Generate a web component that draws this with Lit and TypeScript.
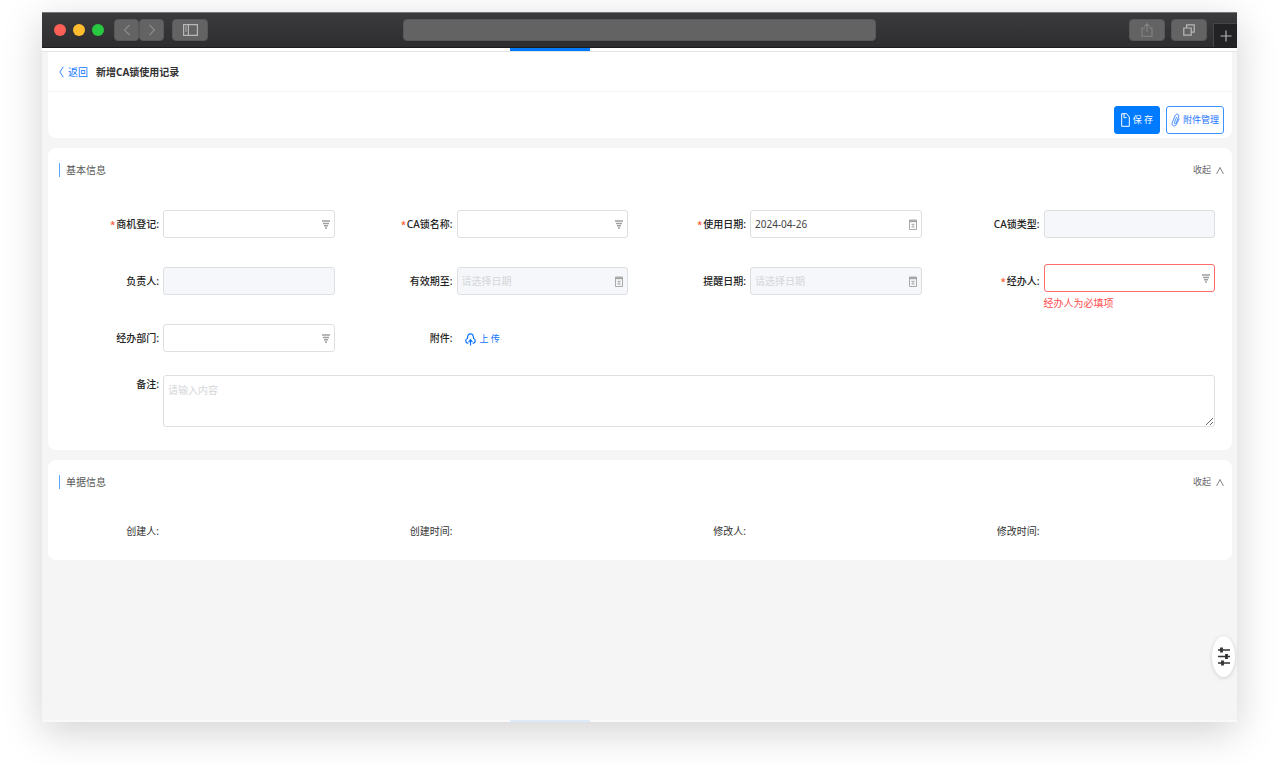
import { LitElement, html, css, svg, nothing } from "lit";
import { customElement, property, state } from "lit/decorators.js";
import { classMap } from "lit/directives/class-map.js";

type Kind = "lookup" | "date" | "text" | "upload";

interface Field {
  id: string;
  label: string;
  kind: Kind;
  required?: boolean;
  disabled?: boolean;
  value?: string;
  placeholder?: string;
  error?: string;
}

const FIELDS: Field[] = [
  { id: "opportunity", label: "商机登记", kind: "lookup", required: true },
  { id: "ca-name", label: "CA锁名称", kind: "lookup", required: true },
  { id: "use-date", label: "使用日期", kind: "date", required: true, value: "2024-04-26" },
  { id: "ca-type", label: "CA锁类型", kind: "text", disabled: true },
  { id: "owner", label: "负责人", kind: "text", disabled: true },
  { id: "valid-until", label: "有效期至", kind: "date", disabled: true, placeholder: "请选择日期" },
  { id: "remind-date", label: "提醒日期", kind: "date", disabled: true, placeholder: "请选择日期" },
  { id: "handler", label: "经办人", kind: "lookup", required: true, error: "经办人为必填项" },
  { id: "department", label: "经办部门", kind: "lookup" },
  { id: "attachment", label: "附件", kind: "upload" },
];

const RECORD = ["创建人", "创建时间", "修改人", "修改时间"];

const icon = (w: number, h: number, body: unknown) => html`<svg
  width=${w} height=${h} viewBox="0 0 ${w} ${h}" fill="none" stroke="currentColor" aria-hidden="true"
>${body}</svg>`;

const icons = {
  prev: icon(8, 12, svg`<path d="M6.5 1 1.5 6l5 5" stroke-width="1.2"/>`),
  next: icon(8, 12, svg`<path d="m1.5 1 5 5-5 5" stroke-width="1.2"/>`),
  sidebar: icon(15, 12, svg`<path d="M.6.6h13.8v10.8H.6zM5.4.6v10.8" stroke-width="1.2"/><path d="M2 3h2M2 5h2M2 7h2" stroke-width=".9"/>`),
  share: icon(12, 14, svg`<path d="M4 5H1v8.2h10V5H8M6 9V1M3.4 3.4 6 .8l2.6 2.6" stroke-width="1.1"/>`),
  tabs: icon(12, 12, svg`<path d="M.8 4h7.4v7.2H.8zM3.6 4V.8h7.6v7.4h-3" stroke-width="1.2"/>`),
  plus: icon(12, 12, svg`<path d="M6 .5v11M.5 6h11" stroke-width="1.1"/>`),
  back: icon(5, 12, svg`<path d="M4.4.8.8 6l3.6 5.2" stroke-width=".9"/>`),
  save: icon(9, 14, svg`<path d="M.7.7h4.9L8.3 4v9.3H.7zM3 .7v4h2.600" stroke-width="1"/>`),
  clip: icon(9, 14, svg`<path d="M8.300 5.400 5.400 11.400C4 14.200.2 13 1.200 9.800L4 3C5.200-.1 8.800.9 7.600 4L5.200 10c-.7 1.500-2.200.9-1.700-.7L5.600 4.200" stroke-width=".8"/>`),
  chevron: icon(8, 9, svg`<path d="m.6 8 3.400-6.500L7.400 8" stroke-width=".8"/>`),
  filter: icon(8, 9, svg`<path d="M0 1h8M1 3.500h6M2 5.700h4M3 8h2" stroke-width="1.500"/>`),
  calendar: icon(8, 11, svg`<path d="M.5 1h7v9.500h-7z" stroke-width=".9"/><path d="M.5 2.200h7" stroke-width="1.900"/><path d="M2.300 5.300h3.400M2.300 8h3.400M4 5.300V8" stroke-width=".8"/>`),
  upload: icon(11, 13, svg`<path d="M3.400 10.200H2.600C.2 9.900.2 5.900 2.400 5.500 2.600-.6 8.400-.6 8.600 5.500c2.200.4 2.200 4.400-.2 4.700h-.8" stroke-width="1.200"/><path d="M5.500 12.600V7M3.700 8.800l1.800-2.200 1.800 2.200" stroke-width="1.200"/>`),
  sliders: icon(12, 19, svg`<path d="M0 3h12M0 9.500h12M0 16h12" stroke-width="1.600"/><path d="M3.500.5v5M8.500 7v5M4.500 13.500v5" stroke-width="2.800"/>`),
};

const base = css`
  :host {
    display: block;
    font-family: "Noto Sans", "Noto Sans CJK SC", sans-serif;
    font-size: 10px;
    line-height: 16px;
    color: #333;
  }
  * {
    box-sizing: border-box;
  }
  svg {
    display: block;
    flex: none;
  }
  button {
    font: inherit;
    margin: 0;
    padding: 0;
    border: 0;
    background: none;
    color: inherit;
    display: flex;
    align-items: center;
    justify-content: center;
    cursor: pointer;
  }
`;

@customElement("form-field")
class FormField extends LitElement {
  @property({ attribute: false }) field!: Field;

  static styles = [
    base,
    css`
      .row {
        display: flex;
        gap: 4px;
        min-height: 57px;
      }
      .label {
        flex: 0 0 100px;
        padding-top: 14px;
        line-height: 28px;
        text-align: right;
        font-weight: 500;
        color: #222;
        white-space: nowrap;
      }
      .required::before {
        content: "*";
        color: #ff4d1a;
        font-size: 9px;
        margin-right: 1px;
      }
      .body {
        flex: 1;
        min-width: 0;
        padding-top: 14px;
      }
      .invalid {
        padding-top: 11px;
      }
      .box {
        display: flex;
        align-items: center;
        height: 28px;
        padding-right: 4px;
        border: 1px solid #dedfe1;
        border-radius: 3px;
        background: #fff;
        color: #a0a0a0;
      }
      .disabled {
        background: #f5f7fa;
      }
      .invalid .box {
        border-color: #ff6b6b;
      }
      .control {
        flex: 1;
        min-width: 0;
        height: 100%;
        padding: 0 4px;
        border: 0;
        outline: 0;
        background: none;
        font: inherit;
        color: #444;
        appearance: none;
      }
      .control::placeholder {
        color: #d4d6d9;
      }
      .error {
        margin: 0;
        line-height: 18px;
        padding-top: 2px;
        margin-bottom: -2px;
        color: #ff4d4f;
      }
      .upload {
        height: 28px;
        gap: 4px;
        padding-left: 8px;
        padding-top: 2px;
        font-size: 9px;
        color: #0a72ff;
      }
    `,
  ];

  private control(f: Field) {
    if (f.kind === "upload") {
      return html`<button id=${f.id} class="upload" type="button">${icons.upload}<span>上 传</span></button>`;
    }
    return html`<div class=${classMap({ box: true, disabled: !!f.disabled })}>
      ${f.kind === "lookup"
        ? html`<select id=${f.id} class="control" aria-invalid=${f.error ? "true" : "false"}><option value=""></option></select>${icons.filter}`
        : html`<input id=${f.id} class="control" type="text" .value=${f.value ?? ""} placeholder=${f.placeholder ?? ""} ?disabled=${f.disabled} />`}
      ${f.kind === "date" ? icons.calendar : nothing}
    </div>`;
  }

  render() {
    const f = this.field;
    return html`<div class="row">
      <label for=${f.id} class=${classMap({ label: true, required: !!f.required })}>${f.label}:</label>
      <div class=${classMap({ body: true, invalid: !!f.error })}>
        ${this.control(f)}
        ${f.error ? html`<p class="error" role="alert">${f.error}</p>` : nothing}
      </div>
    </div>`;
  }
}

@customElement("form-section")
class FormSection extends LitElement {
  @property() heading = "";
  @state() private open = true;

  static styles = [
    base,
    css`
      .card {
        background: #fff;
        border-radius: 8px;
      }
      .head {
        display: flex;
        align-items: center;
        justify-content: space-between;
        height: 48px;
        padding: 0 8px 4px 11px;
      }
      .heading {
        margin: 0;
        padding-left: 6px;
        border-left: 1px solid #5aa5ff;
        font-size: 10px;
        font-weight: 400;
        line-height: 14px;
        color: #555;
      }
      .toggle {
        gap: 5px;
        font-size: 9px;
        color: #666;
      }
    `,
  ];

  render() {
    return html`<section class="card">
      <div class="head">
        <h2 class="heading">${this.heading}</h2>
        <button class="toggle" type="button" aria-expanded=${this.open ? "true" : "false"} @click=${() => (this.open = !this.open)}>
          <span>${this.open ? "收起" : "展开"}</span>${icons.chevron}
        </button>
      </div>
      ${this.open ? html`<slot></slot>` : nothing}
    </section>`;
  }
}

@customElement("app-root")
class AppRoot extends LitElement {
  static styles = [
    base,
    css`
      :host {
        min-height: 100vh;
        padding: 12px 43px 42px 42px;
        box-sizing: border-box;
        background: #fff;
        display: flex;
        overflow: hidden;
      }
      .window {
        position: relative;
        flex: 1;
        min-width: 0;
        display: flex;
        flex-direction: column;
        background: #f5f5f5;
        box-shadow: 0 10px 38px rgba(0, 0, 0, 0.18);
      }
      .titlebar {
        display: grid;
        grid-template-columns: 1fr 39.5% 1fr;
        align-items: center;
        height: 36px;
        background: linear-gradient(#3b3b3e, #2d2d2f);
        border-top: 1px solid #77777b;
        border-bottom: 1px solid #1c1c1e;
        color: #b8b8b8;
      }
      .left {
        display: flex;
        align-items: center;
        padding-left: 12px;
      }
      .dot {
        width: 12px;
        height: 12px;
        margin-right: 7px;
        border-radius: 50%;
      }
      .red {
        background: #ff5f57;
      }
      .yellow {
        background: #febc2e;
      }
      .green {
        background: #28c840;
        margin-right: 10px;
      }
      .tool {
        width: 36px;
        height: 22px;
        border-radius: 4px;
        background: #636363;
        border: 1px solid #58585a;
      }
      .nav {
        width: 25px;
        color: #8a8a8a;
      }
      .nav + .tool:not(.nav) {
        margin-left: 8px;
      }
      .address {
        width: 100%;
        height: 22px;
        padding: 0 8px;
        border: 1px solid #58585a;
        border-radius: 4px;
        background: #636363;
        color: #eee;
        font: inherit;
      }
      .right {
        display: flex;
        align-items: center;
        justify-content: flex-end;
        gap: 6px;
        height: 100%;
      }
      .dim {
        color: #858585;
      }
      .new-tab {
        align-self: flex-end;
        width: 24px;
        height: 24px;
        background: #222224;
        border: solid #464649;
        border-width: 1px 0 0 1px;
      }
      .strip {
        height: 4px;
        background: #fff;
        border-bottom: 1px solid #e3e3e3;
      }
      .marker {
        width: 80px;
        height: 3px;
        margin-left: 39.2%;
        background: #007bff;
      }
      .page {
        flex: 1;
        display: flex;
        flex-direction: column;
        gap: 10px;
        padding: 0 5px 10px 6px;
      }
      .top {
        background: #fff;
        border-radius: 0 0 8px 8px;
      }
      .crumbs {
        display: flex;
        align-items: center;
        height: 40px;
        padding-left: 11px;
        border-bottom: 1px solid #f3f3f3;
      }
      .back {
        display: flex;
        align-items: center;
        gap: 4px;
        color: #1677ff;
        text-decoration: none;
      }
      .title {
        margin: 0 0 0 8px;
        font-size: 10px;
        font-weight: 700;
        line-height: 16px;
        color: #333;
      }
      .actions {
        display: flex;
        justify-content: flex-end;
        gap: 6px;
        padding: 14px 8px 4px;
      }
      .action {
        height: 28px;
        padding: 0 4px;
        gap: 3px;
        border: 1px solid #3b93ff;
        border-radius: 3px;
        background: #fff;
        color: #1a73ff;
        font-size: 9px;
      }
      .primary {
        padding: 0 6px;
        background: #007bff;
        border-color: #007bff;
        color: #fff;
      }
      .grid {
        display: grid;
        grid-template-columns: repeat(4, minmax(0, 1fr));
        column-gap: 18px;
        padding: 0 17px 0 11px;
      }
      .remark {
        grid-column: 1 / -1;
        display: flex;
        gap: 4px;
        padding-bottom: 23px;
      }
      .remark-label {
        flex: 0 0 100px;
        padding-top: 3px;
        line-height: 28px;
        text-align: right;
        font-weight: 500;
        color: #222;
      }
      .remark-input {
        flex: 1;
        min-width: 0;
        height: 52px;
        margin: 8px 0 0;
        padding: 6px 4px;
        border: 1px solid #dedfe1;
        border-radius: 3px;
        outline: 0;
        font: inherit;
        color: #444;
        resize: vertical;
      }
      .remark-input::placeholder {
        color: #d4d6d9;
      }
      .record {
        margin: 0;
        padding-bottom: 6px;
      }
      .item {
        display: flex;
        line-height: 46px;
        color: #333;
      }
      .term {
        flex: 0 0 100px;
        text-align: right;
      }
      .value {
        margin: 0;
      }
      .foot {
        height: 2px;
        background: #f9f9f9;
      }
      .foot-marker {
        width: 80px;
        height: 2px;
        margin-left: 39.2%;
        background: #dfeaf8;
      }
      .settings {
        position: absolute;
        right: 2px;
        bottom: 45px;
        width: 23px;
        height: 41px;
        border-radius: 50%;
        background: #fff;
        box-shadow: 0 1px 4px rgba(0, 0, 0, 0.16);
        color: #333;
      }
    `,
  ];

  render() {
    return html`<div class="window">
      <header class="titlebar">
        <div class="left">
          <span class="dot red"></span><span class="dot yellow"></span><span class="dot green"></span>
          <button class="tool nav" type="button" aria-label="后退">${icons.prev}</button>
          <button class="tool nav" type="button" aria-label="前进">${icons.next}</button>
          <button class="tool" type="button" aria-label="侧边栏">${icons.sidebar}</button>
        </div>
        <input class="address" type="text" aria-label="地址" />
        <div class="right">
          <button class="tool dim" type="button" aria-label="分享">${icons.share}</button>
          <button class="tool" type="button" aria-label="标签页">${icons.tabs}</button>
          <button class="new-tab" type="button" aria-label="新标签页">${icons.plus}</button>
        </div>
      </header>
      <div class="strip"><div class="marker"></div></div>
      <main class="page">
        <div class="top">
          <div class="crumbs">
            <a class="back" href="#">${icons.back}<span>返回</span></a>
            <h1 class="title">新增CA锁使用记录</h1>
          </div>
          <div class="actions">
            <button class="action primary" type="button">${icons.save}<span>保 存</span></button>
            <button class="action" type="button">${icons.clip}<span>附件管理</span></button>
          </div>
        </div>
        <form-section heading="基本信息">
          <div class="grid">
            ${FIELDS.map((f) => html`<form-field .field=${f}></form-field>`)}
            <div class="remark">
              <label class="remark-label" for="remark">备注:</label>
              <textarea id="remark" class="remark-input" placeholder="请输入内容"></textarea>
            </div>
          </div>
        </form-section>
        <form-section heading="单据信息">
          <dl class="grid record">
            ${RECORD.map((t) => html`<div class="item"><dt class="term">${t}:</dt><dd class="value"></dd></div>`)}
          </dl>
        </form-section>
      </main>
      <div class="foot"><div class="foot-marker"></div></div>
      <button class="settings" type="button" aria-label="设置">${icons.sliders}</button>
    </div>`;
  }
}
